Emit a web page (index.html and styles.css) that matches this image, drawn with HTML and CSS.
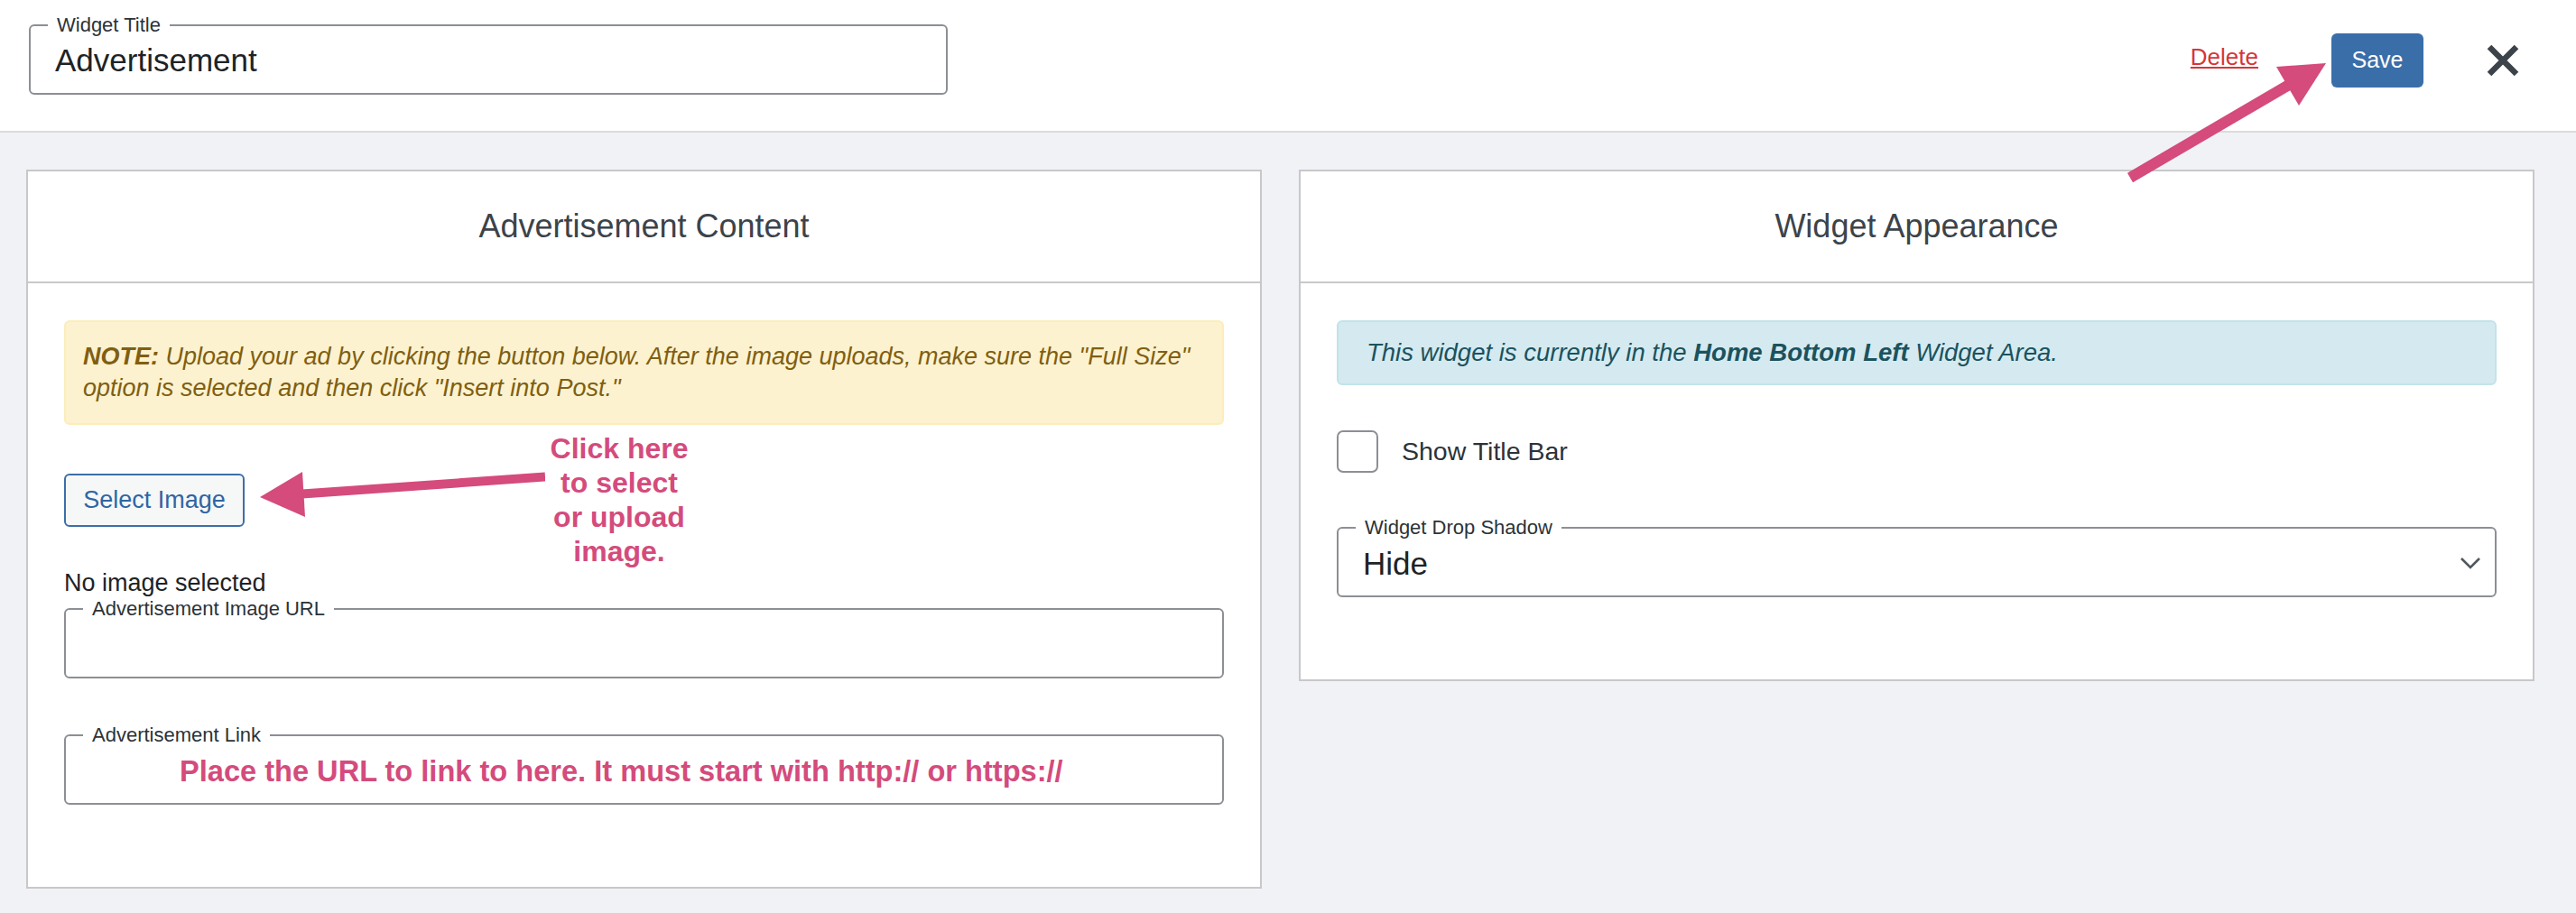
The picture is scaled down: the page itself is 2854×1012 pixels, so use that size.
FILE: index.html
```html
<!DOCTYPE html>
<html>

<head>
<meta charset="UTF-8"/>
<meta name="viewport" content="width=device-width, initial-scale=1.0">
<title>Edit Widget: Advertisement</title>
<link rel="stylesheet" href="styles.css">
</head>

<body>
<header class="topbar">
    <fieldset class="field title-field">
        <legend>Widget Title</legend>
        <input class="field-input" type="text" value="Advertisement">
    </fieldset>
    <div class="actions">
        <a class="delete" href="#">Delete</a>
        <button class="save" type="button">Save</button>
        <button class="close" type="button" aria-label="Close">
            <svg width="36" height="36" viewBox="0 0 36 36"><path d="M3 3 L33 33 M33 3 L3 33" stroke="#3c434a" stroke-width="6.5"/></svg>
        </button>
    </div>
</header>

<main class="panels">
    <section class="panel">
        <h2 class="panel-title">Advertisement Content</h2>
        <div class="panel-body">
            <div class="alert alert-warning"><strong>NOTE:</strong>&nbsp;Upload your ad by clicking the button below. After the image uploads, make sure the "Full Size" option is selected and then click "Insert into Post."</div>

            <div class="select-row">
                <button class="btn-secondary" type="button">Select Image</button>
                <svg class="callout-arrow" width="323" height="152" viewBox="0 0 323 152">
                    <line x1="50" y1="69.8" x2="323" y2="50.5" stroke="#d44b7c" stroke-width="10"/>
                    <polygon points="7,73 54,45 57,95" fill="#d44b7c"/>
                </svg>
                <div class="callout">Click here<br>to select<br>or upload<br>image.</div>
            </div>

            <p class="no-image">No image selected</p>

            <fieldset class="field">
                <legend>Advertisement Image URL</legend>
                <input class="field-input" type="text" value="">
            </fieldset>

            <fieldset class="field">
                <legend>Advertisement Link</legend>
                <div class="field-hint">Place the URL to link to here. It must start with http:// or https://</div>
            </fieldset>
        </div>
    </section>

    <section class="panel">
        <h2 class="panel-title">Widget Appearance</h2>
        <div class="panel-body">
            <div class="alert alert-info">This widget is currently in the <strong>Home Bottom Left</strong> Widget Area.</div>

            <label class="check-row">
                <input class="checkbox" type="checkbox">
                <span>Show Title Bar</span>
            </label>

            <fieldset class="field select-field">
                <legend>Widget Drop Shadow</legend>
                <div class="select-wrap">
                    <select class="field-input">
                        <option>Hide</option>
                        <option>Show</option>
                    </select>
                    <svg width="24" height="16" viewBox="0 0 24 16"><path d="M2 3 L12 13 L22 3" fill="none" stroke="#50575e" stroke-width="2.6"/></svg>
                </div>
            </fieldset>
        </div>
    </section>
</main>

<!-- annotation pointing at the save button -->
<svg class="save-arrow" width="240" height="150" viewBox="0 0 240 150">
    <line x1="10" y1="137" x2="186" y2="34" stroke="#d44b7c" stroke-width="12"/>
    <polygon points="227,10 172,14 197,57" fill="#d44b7c"/>
</svg>

</body>

</html>
```

FILE: styles.css
```css
* {
    box-sizing: border-box;
}
body {
    margin: 0;
    min-height: 100vh;
    position: relative;
    background: #f1f2f6;
    color: #1d2327;
    font-family: "Liberation Sans", Arial, sans-serif;
}

/* top bar */
.topbar {
    display: flex;
    align-items: center;
    height: 147px;
    padding: 0 63px 12px 32px;
    background: #fff;
    border-bottom: 2px solid #dcdcde;
}
.actions {
    display: flex;
    align-items: center;
    margin-left: auto;
}
.delete {
    color: #d63638;
    font-size: 26px;
    margin-bottom: 6px;
}
.save {
    width: 102px;
    height: 60px;
    margin-left: 81px;
    border: none;
    border-radius: 6px;
    background: #3a6ea9;
    color: #fff;
    font-family: inherit;
    font-size: 25px;
}
.close {
    display: flex;
    margin-left: 70px;
    padding: 0;
    border: none;
    background: none;
}

/* outlined fields with a label in the border */
.field {
    margin: 0 0 51px;
    padding: 0 27px 0;
    border: 2px solid #8c8f94;
    border-radius: 6px;
    min-width: 0;
}
.field legend {
    margin-left: -8px;
    padding: 0 10px;
    font-size: 22px;
    line-height: 24px;
    color: #2c3338;
}
.field-input {
    display: block;
    width: 100%;
    height: 63px;
    padding: 0 0 9px;
    border: none;
    outline: none;
    background: transparent;
    color: #1d2327;
    font-family: inherit;
    font-size: 35px;
}
.title-field {
    width: 1018px;
    margin-bottom: 12px;
}
.field-hint {
    display: flex;
    align-items: center;
    height: 63px;
    padding: 0 0 8px 99px;
    color: #d44b7c;
    font-size: 32.6px;
    font-weight: bold;
}
.select-field {
    padding-right: 15px;
}
.select-wrap {
    display: flex;
    align-items: center;
}
.select-wrap select {
    appearance: none;
    -webkit-appearance: none;
    flex: 1;
}
.select-wrap svg {
    margin-bottom: 9px;
}

/* panels */
.panels {
    display: grid;
    grid-template-columns: 1fr 1fr;
    gap: 41px;
    align-items: start;
    padding: 41px 46px 27px 29px;
}
.panel {
    background: #fff;
    border: 2px solid #c8c8cb;
}
.panel-title {
    display: flex;
    align-items: center;
    justify-content: center;
    height: 124px;
    margin: 0;
    border-bottom: 2px solid #c8c8cb;
    color: #3c434a;
    font-size: 36px;
    font-weight: normal;
}
.panel-body {
    padding: 41px 40px 40px;
}

.alert {
    border: 2px solid;
    border-radius: 6px;
    font-style: italic;
}
.alert-warning {
    padding: 21px 19px;
    font-size: 27px;
    line-height: 35px;
    background: #fdf2cf;
    border-color: #fcedba;
    color: #7f5f12;
}
.alert-info {
    padding: 16px 31px;
    font-size: 27.5px;
    line-height: 36px;
    margin-bottom: 50px;
    background: #d4eaf0;
    border-color: #c2e3ea;
    color: #1b525e;
}

.select-row {
    display: flex;
    align-items: center;
    margin-top: 7px;
}
.btn-secondary {
    width: 200px;
    height: 59px;
    border: 2px solid #3b6ea8;
    border-radius: 6px;
    background: #f6f7f7;
    color: #2f66a3;
    font-family: inherit;
    font-size: 27px;
}
.callout-arrow {
    margin-left: 10px;
}
.callout {
    width: 160px;
    margin-left: 2px;
    text-align: center;
    color: #d44b7c;
    font-size: 32px;
    font-weight: bold;
    line-height: 38px;
}
.no-image {
    margin: 0;
    font-size: 27px;
    line-height: 33px;
}

.check-row {
    display: flex;
    align-items: center;
    gap: 26px;
    margin-bottom: 49px;
    font-size: 28.5px;
    color: #2c3338;
}
.checkbox {
    appearance: none;
    -webkit-appearance: none;
    width: 46px;
    height: 47px;
    margin: 0;
    border: 2px solid #8c8f94;
    border-radius: 7px;
    background: #fff;
}

.save-arrow {
    position: absolute;
    left: 2350px;
    top: 60px;
}
```
